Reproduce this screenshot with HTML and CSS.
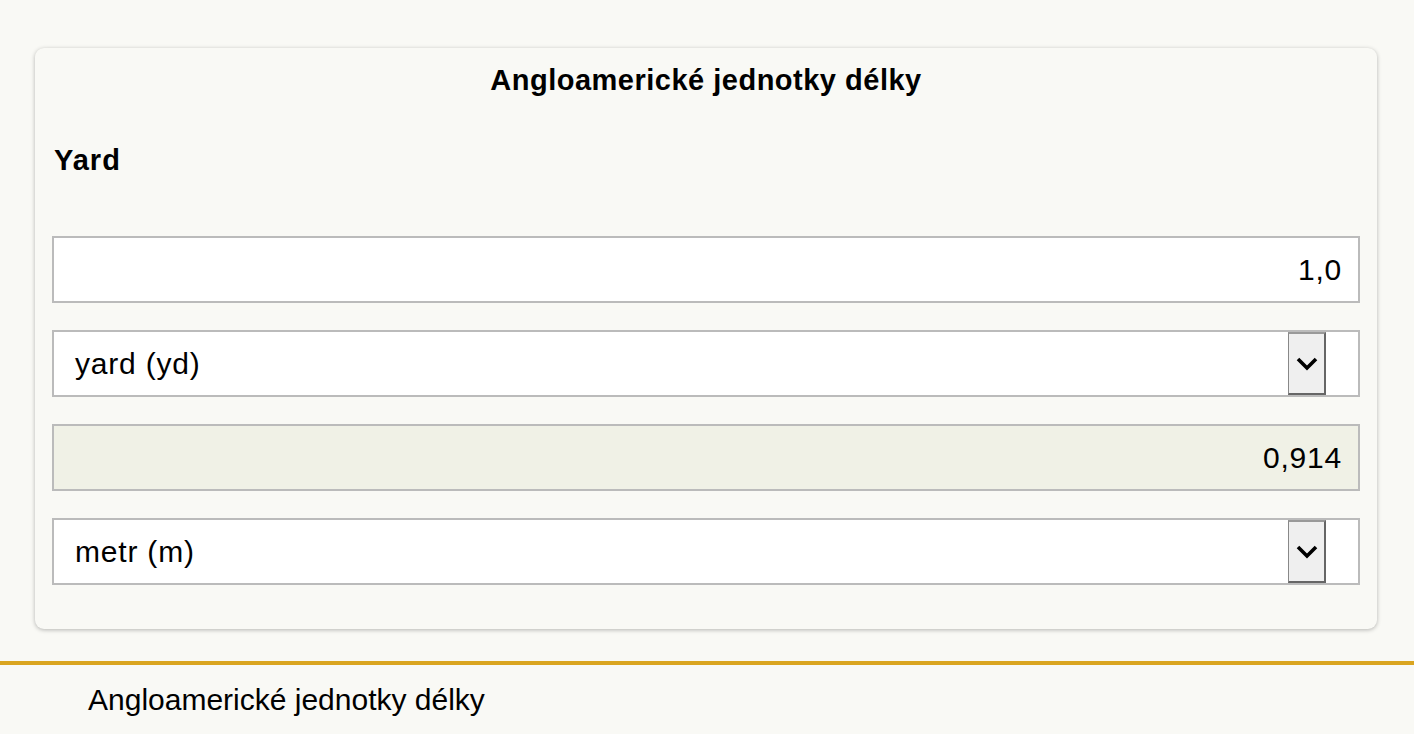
FILE: index.html
```html
<!DOCTYPE html>
<html lang="cs">
<head>
    <meta charset="UTF-8">
    <meta name="viewport" content="width=device-width, initial-scale=1.0">
    <title>Angloamerické jednotky délky</title>
    <link rel="stylesheet" href="styles.css">
</head>
<body>
    <!-- převodník -->
    <div class="converter">
        <h1>Angloamerické jednotky délky</h1>
        <h2>Yard</h2>

        <div class="field">1,0</div>

        <div class="select">
            <span class="select-text">yard (yd)</span>
            <span class="select-arrow">
                <svg width="22" height="14" viewBox="0 0 22 14"><polyline points="2,2 11,11 20,2" fill="none" stroke="#000" stroke-width="3.6"/></svg>
            </span>
        </div>

        <div class="field result">0,914</div>

        <div class="select">
            <span class="select-text">metr (m)</span>
            <span class="select-arrow">
                <svg width="22" height="14" viewBox="0 0 22 14"><polyline points="2,2 11,11 20,2" fill="none" stroke="#000" stroke-width="3.6"/></svg>
            </span>
        </div>
    </div>

    <div class="footer">
        <p>Angloamerické jednotky délky</p>
    </div>
</body>
</html>
```

FILE: styles.css
```css
body {
    margin: 0;
    font-family: "Liberation Sans", Arial, sans-serif;
    background-color: #f9f9f5;
    color: #000;
}
.converter {
    margin: 48px 37px 0 35px;
    padding: 15px 17px 44px;
    border-radius: 9px;
    background-color: #f9f9f5;
    box-shadow: 0 1px 4px rgba(0, 0, 0, 0.28);
}
.converter h1 {
    margin: 0;
    font-size: 29px;
    line-height: 34px;
    letter-spacing: 0.5px;
    text-align: center;
}
.converter h2 {
    margin: 46px 0 59px 2px;
    font-size: 29px;
    line-height: 34px;
    letter-spacing: 1px;
}
.field {
    height: 63px;
    border: 2px solid #bbb;
    background-color: #fff;
    padding-right: 16px;
    font-size: 30px;
    line-height: 63px;
    letter-spacing: 0.8px;
    text-align: right;
    margin-bottom: 27px;
}
.field.result {
    background-color: #f0f1e6;
}
.select {
    display: flex;
    height: 63px;
    border: 2px solid #bbb;
    background-color: #fff;
    margin-bottom: 27px;
}
.select:last-child {
    margin-bottom: 0;
}
.select-text {
    flex: 1;
    padding-left: 21px;
    font-size: 30px;
    line-height: 63px;
    letter-spacing: 0.8px;
}
.select-arrow {
    width: 38px;
    margin-right: 32px;
    display: flex;
    align-items: center;
    justify-content: center;
    background-color: #efefef;
    border-top: 2px solid #999;
    border-left: 1px solid #888;
    border-right: 2px solid #666;
    border-bottom: 2px solid #666;
    box-sizing: border-box;
}
.footer {
    margin-top: 32px;
    border-top: 4px solid #daa520;
    padding: 18px 0 0 88px;
}
.footer p {
    margin: 0;
    font-size: 30px;
    line-height: 34px;
}
```
